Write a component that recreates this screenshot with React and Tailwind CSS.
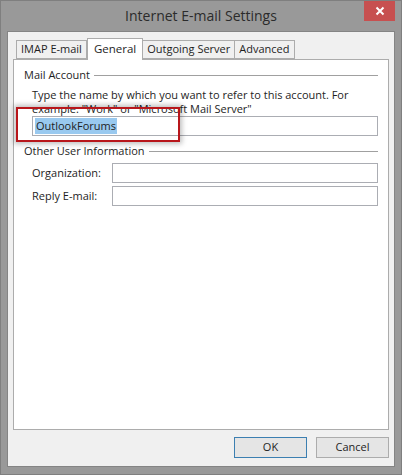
import React from "react";

const font = { fontFamily: '"Open Sans", "Noto Sans", sans-serif' };

const tabs = ["IMAP E-mail", "General", "Outgoing Server", "Advanced"];

const GroupTitle = ({ children }) => (
  <div className="flex items-center h-[16px]">
    <span className="text-[11px] text-[#1e1e1e] mr-[4px] whitespace-nowrap">{children}</span>
    <div className="flex-1 h-px bg-[#a0a0a0]" />
  </div>
);

const Field = ({ label }) => (
  <div className="flex items-center h-[20px]">
    <span className="w-[80px] text-[11px] text-[#1e1e1e]">{label}</span>
    <div className="flex-1 h-[20px] bg-white border border-[#abadb3]" />
  </div>
);

export default function App() {
  return (
    <div
      className="w-[402px] h-[475px] bg-[#999999] border border-[#7f7f7f] flex flex-col select-none"
      style={font}
    >
      {/* title bar */}
      <div className="relative h-[30px] flex items-center justify-center">
        <span className="text-[14px] text-[#2b2b2b] -mt-[2px]">Internet E-mail Settings</span>
        <button className="absolute right-[6px] top-0 w-[31px] h-[20px] bg-[#c75050] flex items-center justify-center">
          <svg width="10" height="10" viewBox="0 0 10 10">
            <path d="M1.5 1.5 L8.5 8.5 M8.5 1.5 L1.5 8.5" stroke="white" strokeWidth="2" />
          </svg>
        </button>
      </div>

      {/* client area */}
      <div className="mx-[6px] h-[436px] bg-[#f0f0f0] border border-[#848484] flex flex-col px-[5px] pt-[5px]">
        {/* tab strip */}
        <div className="flex items-end h-[22px] pl-[3px] relative z-10">
          {tabs.map((t) =>
            t === "General" ? (
              <div
                key={t}
                className="h-[22px] -mb-px px-[6px] bg-white border border-b-0 border-[#acacac] text-[11.5px] text-[#1e1e1e] flex items-start pt-[1px]"
              >
                {t}
              </div>
            ) : (
              <div
                key={t}
                className="h-[19px] px-[4px] bg-[#f0f0f0] border border-[#acacac] -ml-px first:ml-0 text-[11px] text-[#1e1e1e] flex items-center"
              >
                {t}
              </div>
            )
          )}
        </div>

        {/* tab panel */}
        <div className="h-[371px] bg-white border border-[#acacac] px-[10px] pt-[7px]">
          <GroupTitle>Mail Account</GroupTitle>
          <div className="pl-[8px] pt-[5px]">
            <p className="text-[11px] leading-[14px] text-[#1e1e1e]">
              Type the name by which you want to refer to this account. For example: "Work" or "Microsoft Mail Server"
            </p>
            <div className="relative h-[20px] bg-white border border-[#abadb3] flex items-center px-[2px]">
              <span className="bg-[#99c9ef] text-[11px] leading-[16px] text-[#1e1e1e] px-px">OutlookForums</span>
              <div className="absolute left-[-17px] top-[-10px] w-[164px] h-[35px] border-2 border-[#b8161b] shadow-[0_0_5px_2px_rgba(0,0,0,0.25)]" />
            </div>
          </div>

          <div className="mt-[7px]">
            <GroupTitle>Other User Information</GroupTitle>
          </div>
          <div className="pl-[8px] pt-[4px] flex flex-col gap-[3px]">
            <Field label="Organization:" />
            <Field label="Reply E-mail:" />
          </div>
        </div>

        {/* buttons */}
        <div className="flex justify-end gap-[9px] mt-[7px]">
          <button className="w-[73px] h-[21px] bg-[#e5e5e5] border border-[#3c7fb1] text-[11px] text-[#1e1e1e]">
            OK
          </button>
          <button className="w-[73px] h-[21px] bg-[#e5e5e5] border border-[#acacac] text-[11px] text-[#1e1e1e]">
            Cancel
          </button>
        </div>
      </div>
    </div>
  );
}
